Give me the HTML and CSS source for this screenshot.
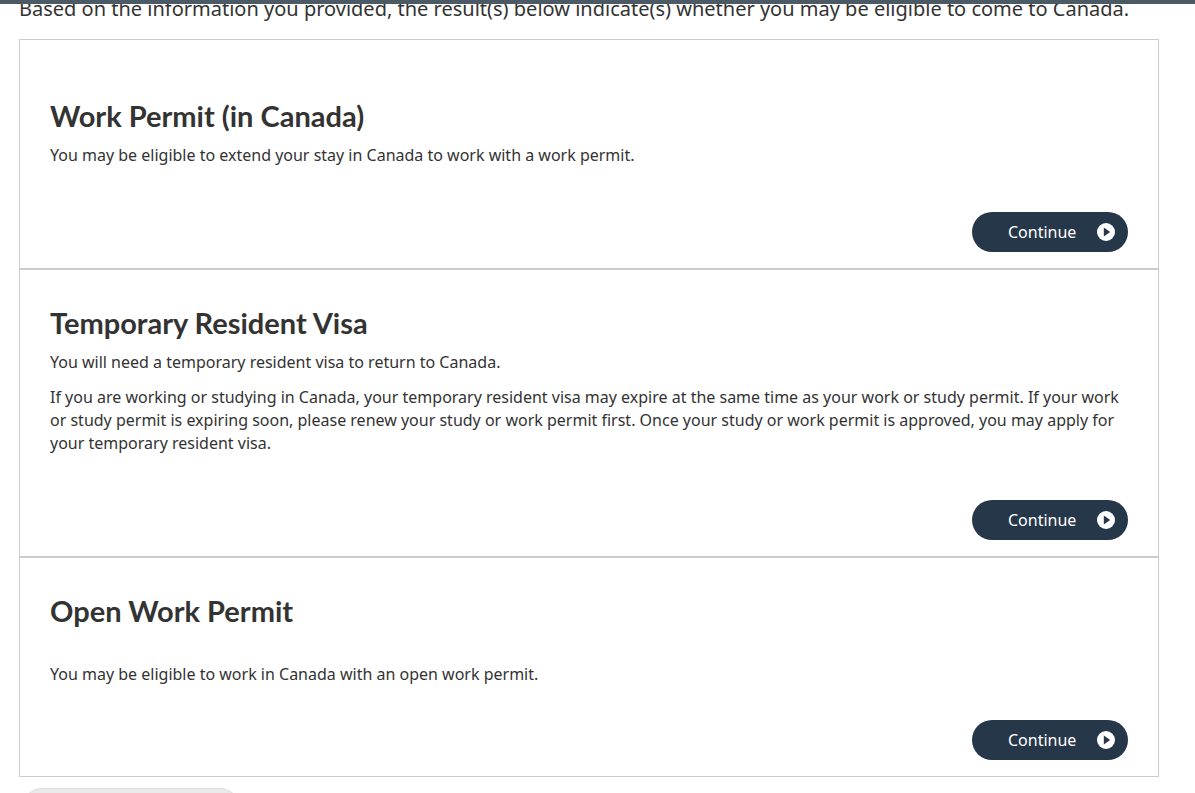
FILE: index.html
```html
<!DOCTYPE html>
<html lang="en">
<head>
    <meta charset="UTF-8">
    <title>Results</title>
    <link rel="stylesheet" href="styles.css">
</head>
<body>
<div class="topbar"></div>
<div class="page">
    <p class="intro">Based on the information you provided, the result(s) below indicate(s) whether you may be eligible to come to Canada.</p>

    <div class="results">
        <div class="result result-first">
            <h2>Work Permit (in Canada)</h2>
            <p>You may be eligible to extend your stay in Canada to work with a work permit.</p>
            <div class="actions">
                <a class="btn" href="#">Continue <span class="btn-icon"><svg viewBox="0 0 18 18" width="18" height="18"><circle cx="9" cy="9" r="9" fill="#fff"/><path d="M6.8 4.6 L13.2 9 L6.8 13.4 Z" fill="#26374a"/></svg></span></a>
            </div>
        </div>
        <div class="result">
            <h2>Temporary Resident Visa</h2>
            <p>You will need a temporary resident visa to return to Canada.</p>
            <p>If you are working or studying in Canada, your temporary resident visa may expire at the same time as your work or study permit. If your work or study permit is expiring soon, please renew your study or work permit first. Once your study or work permit is approved, you may apply for your temporary resident visa.</p>
            <div class="actions">
                <a class="btn" href="#">Continue <span class="btn-icon"><svg viewBox="0 0 18 18" width="18" height="18"><circle cx="9" cy="9" r="9" fill="#fff"/><path d="M6.8 4.6 L13.2 9 L6.8 13.4 Z" fill="#26374a"/></svg></span></a>
            </div>
        </div>
        <div class="result result-last">
            <h2>Open Work Permit</h2>
            <p>You may be eligible to work in Canada with an open work permit.</p>
            <div class="actions">
                <a class="btn" href="#">Continue <span class="btn-icon"><svg viewBox="0 0 18 18" width="18" height="18"><circle cx="9" cy="9" r="9" fill="#fff"/><path d="M6.8 4.6 L13.2 9 L6.8 13.4 Z" fill="#26374a"/></svg></span></a>
            </div>
        </div>
    </div>

    <div class="back-btn"></div>
</div>
</body>
</html>
```

FILE: styles.css
```css
* {
    padding: 0;
    margin: 0;
    box-sizing: border-box;
}

body {
    font-family: "Noto Sans", "Open Sans", sans-serif;
    color: #333;
    background: #fff;
    overflow: hidden;
}

.topbar {
    position: fixed;
    left: 0;
    top: 0;
    width: 100%;
    height: 4px;
    background: #4b5a65;
}

.page {
    padding-left: 19px;
    width: 1159px;
}

/* page is scrolled a little, so the first line sits under the bar */
.intro {
    font-size: 20px;
    line-height: 30px;
    margin-top: -6px;
    margin-bottom: 15px;
}

.results {
    border: 1px solid #ccc;
}

.result {
    padding: 35px 30px 16px;
    border-top: 2px solid #ccc;
}

.result-first {
    border-top: 0;
    padding-top: 58px;
}

.result h2 {
    font-family: Lato, sans-serif;
    font-weight: 700;
    font-size: 29px;
    line-height: 35px;
    color: #333;
    margin-bottom: 11px;
}

.result p {
    font-size: 16px;
    line-height: 23px;
    margin-bottom: 12px;
}

.result-last p {
    margin-top: 35px;
    margin-bottom: 0;
}

.actions {
    display: flex;
    justify-content: flex-end;
    margin-top: 45px;
}

.result-last .actions {
    margin-top: 34px;
}

.btn {
    display: flex;
    align-items: center;
    width: 156px;
    height: 40px;
    padding-left: 36px;
    border-radius: 20px;
    background: #26374a;
    color: #fff;
    font-size: 16px;
    text-decoration: none;
}

.btn-icon {
    display: flex;
    margin-left: 21px;
}

.back-btn {
    margin: 11px 0 0 3px;
    width: 218px;
    height: 40px;
    border: 1px solid #ddd;
    border-radius: 20px;
    background: #eaeaea;
}
```
